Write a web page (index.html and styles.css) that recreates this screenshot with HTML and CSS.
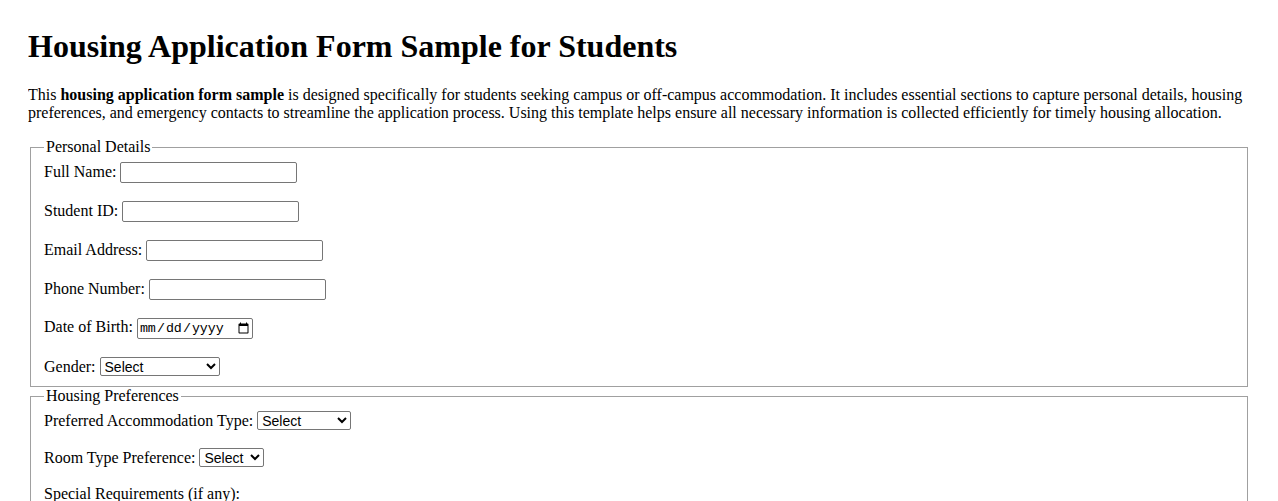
FILE: index.html
```html
<!DOCTYPE html>
<html lang="en">
  <head>
    <meta charset="UTF-8" />
    <meta name="viewport" content="width=device-width, initial-scale=1.0" />
    <title>Housing Application Form Sample for Students</title>
    <link rel="stylesheet" href="styles.css">
  </head>
  <body>
    <h1>Housing Application Form Sample for Students</h1>
    <p>
      This <strong>housing application form sample</strong> is designed specifically for students seeking campus or off-campus accommodation. It includes essential sections to capture personal details, housing preferences, and emergency contacts to streamline the application process. Using this template helps ensure all necessary information is collected efficiently for timely housing allocation.
    </p>

    <form>
      <fieldset>
        <legend>Personal Details</legend>
        <div class="row">
          <label for="fullName">Full Name:</label>
          <input type="text" id="fullName" name="fullName" />
        </div>
        <div class="row">
          <label for="studentId">Student ID:</label>
          <input type="text" id="studentId" name="studentId" />
        </div>
        <div class="row">
          <label for="email">Email Address:</label>
          <input type="email" id="email" name="email" />
        </div>
        <div class="row">
          <label for="phone">Phone Number:</label>
          <input type="tel" id="phone" name="phone" />
        </div>
        <div class="row">
          <label for="dob">Date of Birth:</label>
          <input type="date" id="dob" name="dob" />
        </div>
        <div class="row">
          <label for="gender">Gender:</label>
          <select id="gender" name="gender" class="select-gender">
            <option value="">Select</option>
            <option>Male</option>
            <option>Female</option>
            <option>Non-binary</option>
            <option>Prefer not to say</option>
          </select>
        </div>
      </fieldset>

      <fieldset>
        <legend>Housing Preferences</legend>
        <div class="row">
          <label for="accommodation">Preferred Accommodation Type:</label>
          <select id="accommodation" name="accommodation" class="select-type">
            <option value="">Select</option>
            <option>On-Campus</option>
            <option>Off-Campus</option>
            <option>Dormitory</option>
          </select>
        </div>
        <div class="row">
          <label for="roomType">Room Type Preference:</label>
          <select id="roomType" name="roomType" class="select-room">
            <option value="">Select</option>
            <option>Single</option>
            <option>Double</option>
            <option>Shared</option>
          </select>
        </div>
        <div class="row">
          <label for="special">Special Requirements (if any):</label><br />
          <textarea id="special" name="special" rows="4" cols="50"></textarea>
        </div>
      </fieldset>

      <fieldset>
        <legend>Emergency Contact</legend>
        <div class="row">
          <label for="contactName">Contact Name:</label>
          <input type="text" id="contactName" name="contactName" />
        </div>
        <div class="row">
          <label for="relationship">Relationship:</label>
          <input type="text" id="relationship" name="relationship" />
        </div>
        <div class="row">
          <label for="contactPhone">Contact Phone:</label>
          <input type="tel" id="contactPhone" name="contactPhone" />
        </div>
      </fieldset>

      <button type="submit">Submit Application</button>
    </form>
  </body>
</html>
```

FILE: styles.css
```css
body {
  margin: 0 28px;
  padding: 7px 0 28px;
  font-family: "Liberation Serif", "Times New Roman", serif;
  font-size: 16px;
  color: #000;
  background: #fff;
}

h1 {
  font-size: 32px;
  margin: 21px 0;
}

p {
  margin: 16px 0;
}

fieldset {
  margin: 0 2px;
  padding: 6px 12px 10px 13px;
  border: 1px solid #a0a0a0;
}
fieldset + fieldset legend {
  margin-top: 1px;
}

legend {
  padding: 0 2px;
}

.row {
  margin-bottom: 18px;
}
.row:last-child {
  margin-bottom: 0;
}

input,
select,
textarea,
button {
  font-family: "Liberation Sans", Arial, sans-serif;
  font-size: 13.33px;
}

input[type="text"],
input[type="email"],
input[type="tel"] {
  width: 177px;
  height: 21px;
  box-sizing: border-box;
  padding: 1px 2px;
  border: 1px solid #767676;
  border-radius: 2px;
}

input[type="date"] {
  font-family: "Liberation Mono", "Courier New", monospace;
  width: 116px;
  height: 21px;
  box-sizing: border-box;
  border: 1px solid #767676;
  border-radius: 2px;
}

select {
  height: 19px;
  font-size: 14px;
  border: 1px solid #767676;
  border-radius: 2px;
  background: #fff;
}
.select-gender {
  width: 120px;
}
.select-type {
  width: 94px;
}
.select-room {
  width: 65px;
}

button {
  margin-top: 16px;
}
```
